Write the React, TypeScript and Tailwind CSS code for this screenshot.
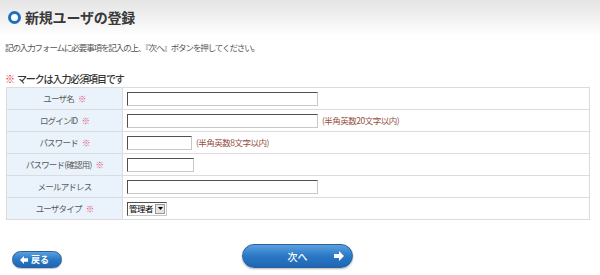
import React from "react"

const font = { fontFamily: '"Noto Sans CJK JP", "Noto Sans", sans-serif' }

function Req() {
  return <span className="ml-[4px] text-[#e2567a]">※</span>
}

function TextBox({ w }: { w: string }) {
  return (
    <div
      className={`${w} h-[14px] bg-white border border-t-[#505050] border-l-[#505050] border-r-[#c8c8c8] border-b-[#c8c8c8]`}
    />
  )
}

function Note({ children }: { children: React.ReactNode }) {
  return <span className="ml-[4px] text-[8.5px] tracking-[-0.5px] text-[#94503f]">{children}</span>
}

export default function App() {
  const rows: { label: string; req: boolean; field: React.ReactNode }[] = [
    { label: "ユーザ名", req: true, field: <TextBox w="w-[191px]" /> },
    {
      label: "ログインID",
      req: true,
      field: (
        <>
          <TextBox w="w-[191px]" />
          <Note>(半角英数20文字以内)</Note>
        </>
      ),
    },
    {
      label: "パスワード",
      req: true,
      field: (
        <>
          <TextBox w="w-[65px]" />
          <Note>(半角英数8文字以内)</Note>
        </>
      ),
    },
    { label: "パスワード(確認用)", req: true, field: <TextBox w="w-[67px]" /> },
    { label: "メールアドレス", req: false, field: <TextBox w="w-[191px]" /> },
    {
      label: "ユーザタイプ",
      req: true,
      field: (
        <div className="flex items-center h-[14px] w-[40px] bg-white border border-t-[#505050] border-l-[#505050] border-r-[#c8c8c8] border-b-[#c8c8c8]">
          <span className="flex-1 pl-[1px] text-[8.5px] leading-none tracking-[-0.5px] text-black">管理者</span>
          <span className="w-[10px] h-[10px] mr-[1px] flex items-center justify-center bg-[#e4e4e4] border border-[#9a9a9a]">
            <svg width="5" height="3" viewBox="0 0 5 3">
              <path d="M0 0 H5 L2.5 3 Z" fill="#000" />
            </svg>
          </span>
        </div>
      ),
    },
  ]

  return (
    <div className="w-[600px] h-[275px] bg-white overflow-hidden" style={font}>
      {/* タイトル */}
      <div className="h-[36px] bg-gradient-to-b from-[#e4e4e4] to-white flex items-center pl-[8px] pb-[2px]">
        <svg width="13" height="13" viewBox="0 0 13 13">
          <circle cx="6.5" cy="6.5" r="5" fill="#fff" stroke="#1f6fbe" strokeWidth="3" />
        </svg>
        <h1 className="ml-[4px] text-[14px] font-bold tracking-[-0.2px] text-[#3a3a3a]">新規ユーザの登録</h1>
      </div>

      <p className="mt-[6px] ml-[5px] text-[8.5px] leading-[10px] tracking-[-1.1px] text-[#555]">
        記の入力フォームに必要事項を記入の上、『次へ』ボタンを押してください。
      </p>

      <p className="mt-[21px] ml-[5px] text-[10px] leading-[12px] font-medium tracking-[-1.1px] text-[#333]">
        <span className="text-[#e0242f] font-bold mr-[3px]">※</span>マークは入力必須項目です
      </p>

      <table className="mt-[2px] ml-[6px] w-[584px] border-collapse">
        <tbody>
          {rows.map((r) => (
            <tr key={r.label} className="h-[22px]">
              <td className="w-[116px] p-0 bg-[#eaf3fc] border border-[#dcdcdc] text-center whitespace-nowrap text-[8.5px] tracking-[-0.8px] text-[#5a5a5a]">
                {r.label}
                {r.req && <Req />}
              </td>
              <td className="p-0 pl-[4px] border border-[#dcdcdc]">
                <div className="flex items-center">{r.field}</div>
              </td>
            </tr>
          ))}
        </tbody>
      </table>

      {/* ボタン */}
      <div className="relative mt-[24px] h-[26px]">
        <button className="absolute left-[12px] top-[7px] w-[50px] h-[17px] rounded-full border border-[#2763a3] bg-gradient-to-b from-[#5aa0de] via-[#2a78c6] to-[#1f66b2] shadow-[0_1px_1px_rgba(0,0,0,0.25)] flex items-center pl-[7px] text-white text-[9px] font-bold">
          <svg width="8" height="8" viewBox="0 0 8 8" className="mr-[3px]">
            <path d="M0 4 L4 0 V2.3 H8 V5.7 H4 V8 Z" fill="#fff" />
          </svg>
          戻る
        </button>
        <button className="absolute left-[242px] top-[0px] w-[111px] h-[24px] rounded-full border border-[#2763a3] bg-gradient-to-b from-[#5aa0de] via-[#2a78c6] to-[#1f66b2] shadow-[0_1px_2px_rgba(0,0,0,0.3)] flex items-center justify-center text-white text-[10px] font-medium">
          次へ
          <svg width="10" height="10" viewBox="0 0 10 10" className="absolute right-[8px] top-[6px]">
            <path d="M10 5 L5 0 V3 H0 V7 H5 V10 Z" fill="#fff" />
          </svg>
        </button>
      </div>
    </div>
  )
}
